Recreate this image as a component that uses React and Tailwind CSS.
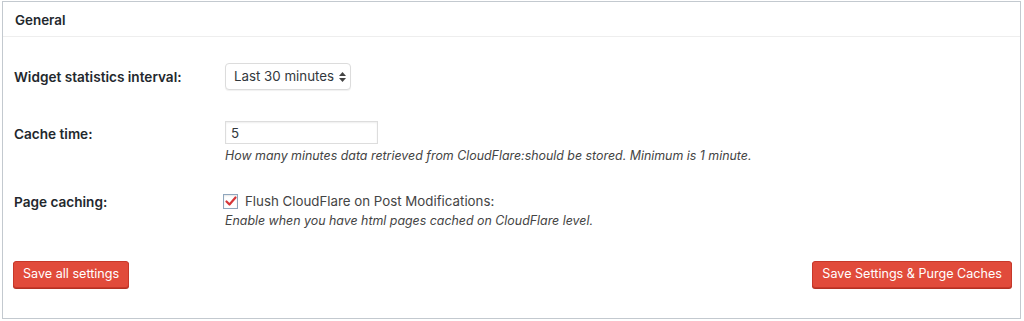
import React, { useState } from 'react';

const font = { fontFamily: 'Inter, "Noto Sans", "Liberation Sans", sans-serif' };

const Row = ({ label, children, className = '', labelClass = 'pt-[5px]' }) => (
  <div className={`flex items-start ${className}`}>
    <div className={`w-[211px] shrink-0 ${labelClass} text-[13.6px] font-semibold text-[#23282d]`}>{label}</div>
    <div className="flex flex-col">{children}</div>
  </div>
);

export default function App() {
  const [interval, setInterval] = useState('30');
  const [cacheTime, setCacheTime] = useState('5');
  const [flush, setFlush] = useState(true);

  return (
    <div className="w-[1024px] h-[321px] bg-white pl-[2px] pr-[3px] pt-[1px] pb-[2px]" style={font}>
      <div className="h-full border border-[#c3c9cf] bg-white flex flex-col">
        {/* Header */}
        <div className="h-[35px] flex items-center pt-[3px] px-[12px] border-b border-[#eeeeee]">
          <h2 className="text-[13.4px] font-semibold text-[#23282d]">General</h2>
        </div>

        <div className="flex flex-col pl-[11px] pr-[8px] pt-[26px]">
          {/* Widget interval */}
          <Row label="Widget statistics interval:" labelClass="pt-[4px]">
            <div className="relative w-[126px] h-[27px] border border-[#dcdcdc] rounded-[4px] bg-white shadow-[0_1px_1px_rgba(0,0,0,0.06)] flex items-center pl-[8px]">
              <select
                value={interval}
                onChange={(e) => setInterval(e.target.value)}
                className="appearance-none bg-transparent outline-none text-[13.3px] text-[#32373c] w-full pr-4"
                style={font}
              >
                <option value="5">Last 5 minutes</option>
                <option value="30">Last 30 minutes</option>
                <option value="60">Last hour</option>
              </select>
              <svg className="absolute right-[4px] top-[8px] pointer-events-none" width="7" height="10" viewBox="0 0 7 10">
                <path d="M3.5 0 L7 4 L0 4 Z" fill="#444" />
                <path d="M0 6 L7 6 L3.5 10 Z" fill="#444" />
              </svg>
            </div>
          </Row>

          {/* Cache time */}
          <Row label="Cache time:" className="mt-[31px]" labelClass="pt-[3px]">
            <input
              type="text"
              value={cacheTime}
              onChange={(e) => setCacheTime(e.target.value)}
              className="w-[153px] h-[23px] border border-[#dddddd] shadow-[inset_0_1px_2px_rgba(0,0,0,0.07)] px-[5px] text-[13.3px] text-[#32373c] outline-none"
              style={font}
            />
            <p className="mt-[3px] text-[12.4px] italic text-[#444]">
              How many minutes data retrieved from CloudFlare:should be stored. Minimum is 1 minute.
            </p>
          </Row>

          {/* Page caching */}
          <Row label="Page caching:" className="mt-[26px]" labelClass="pt-0">
            <label className="flex items-center gap-[7px] text-[13.3px] text-[#444] cursor-pointer -ml-[2px]">
              <span
                onClick={() => setFlush(!flush)}
                className="w-[15px] h-[15px] border border-[#8fa6bd] bg-white shadow-[inset_0_1px_2px_rgba(0,0,0,0.1)] flex items-center justify-center"
              >
                {flush && (
                  <svg width="12" height="11" viewBox="0 0 12 11">
                    <path d="M1.5 5.5 L4.5 8.5 L10.5 1.5" stroke="#d63638" strokeWidth="2.2" fill="none" strokeLinecap="round" strokeLinejoin="round" />
                  </svg>
                )}
              </span>
              Flush CloudFlare on Post Modifications:
            </label>
            <p className="text-[12.4px] italic text-[#444] leading-[17px]">
              Enable when you have html pages cached on CloudFlare level.
            </p>
          </Row>

          {/* Buttons */}
          <div className="flex justify-between mt-[32px]">
            <button className="h-[27px] px-[9px] -ml-[1px] rounded-[3px] bg-[#e14b3b] border border-[#c7382a] text-white text-[12.6px] shadow-[0_1px_0_#b33224]">
              Save all settings
            </button>
            <button className="h-[27px] px-[9px] rounded-[3px] bg-[#e14b3b] border border-[#c7382a] text-white text-[12.6px] shadow-[0_1px_0_#b33224]">
              Save Settings &amp; Purge Caches
            </button>
          </div>
        </div>
      </div>
    </div>
  );
}
